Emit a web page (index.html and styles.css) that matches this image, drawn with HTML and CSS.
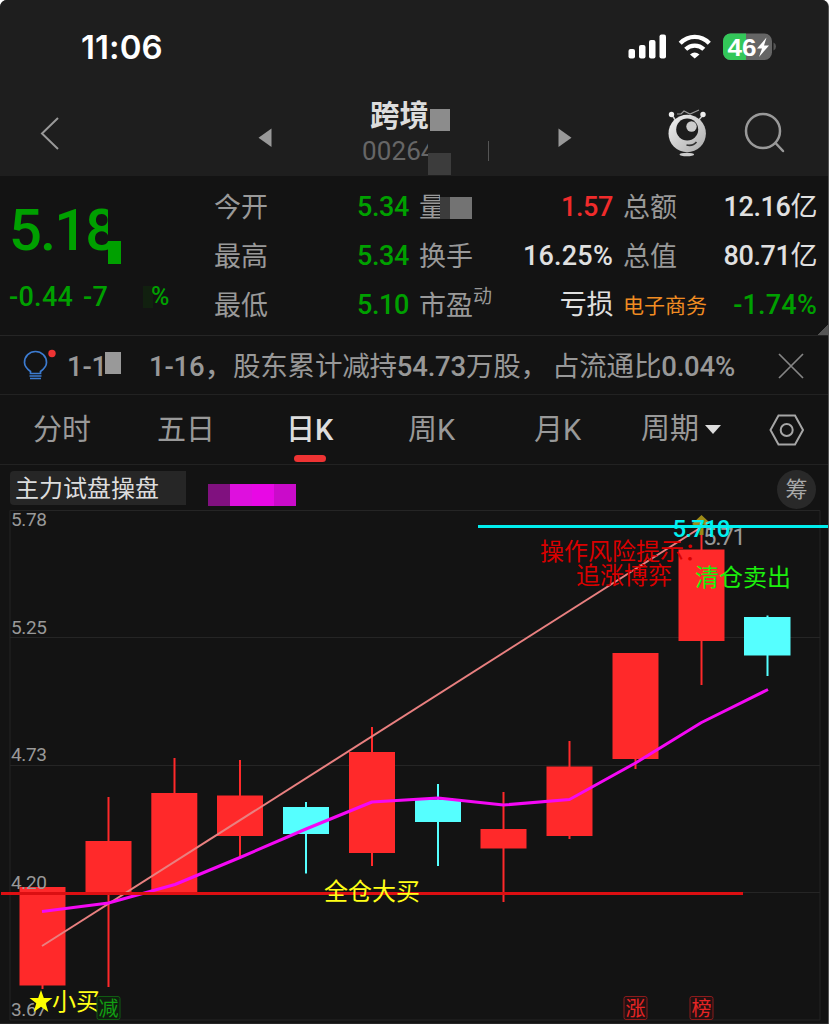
FILE: index.html
```
<!DOCTYPE html>
<html lang="zh-CN">
<head>
  <meta charset="UTF-8" />
  <meta name="viewport" content="width=device-width, initial-scale=1.0"/>
  <title>日K</title>
  <link rel="stylesheet" href="styles.css">
</head>
<body>
  <div class="phone">
    <header class="top">
      <div class="status">
        <span class="time">11:06</span>
        <svg class="signals" width="150" height="30" viewBox="626 32 150 30">
          <g fill="#fff">
            <rect x="628.5" y="49" width="6.5" height="9.5" rx="2"/>
            <rect x="639" y="45" width="6.5" height="13.5" rx="2"/>
            <rect x="649" y="40" width="6.5" height="18.5" rx="2"/>
            <rect x="659.500" y="34.500" width="6.500" height="24" rx="2"/>
            <path d="M690 54.500Q694.500 50.500 699.500 54.500L694.700 58.500Z"/>
          </g>
          <g fill="none" stroke="#fff" stroke-width="4.300">
            <path d="M680.200 43.200C688.500 34.800 701 34.800 709.300 43.200"/>
            <path d="M685.700 49.200C690.800 44.300 698.700 44.300 703.800 49.200"/>
          </g>
          <clipPath id="cell"><rect x="723" y="33.500" width="49" height="26.500" rx="7.500"/></clipPath>
          <g clip-path="url(#cell)">
            <rect x="723" y="33" width="49" height="27" fill="#656565"/>
            <rect x="723" y="33" width="23" height="27" fill="#33c759"/>
          </g>
          <path d="M773.500 42.500Q776 43.500 776 46.500T773.500 50.500Z" fill="#555"/>
          <text class="charge" x="727.500" y="55.500" textLength="29" lengthAdjust="spacingAndGlyphs">46</text>
          <path d="M766.500 37.500L757 48.500H762L759 57L769 45.500H764Z" fill="#fff"/>
        </svg>
      </div>
      <nav class="nav">
        <svg class="back" width="22" height="34" viewBox="0 0 22 34"><path d="M19 2L3 17.500L19 33" fill="none" stroke="#999" stroke-width="2"/></svg>
        <svg class="prev" width="14" height="20" viewBox="0 0 14 20"><path d="M13.500 0.500V19L0.500 9.700Z" fill="#999"/></svg>
        <div class="stock">
          <div class="name">跨境<i class="mask"></i></div>
          <div class="code"><span class="digits">00264</span><i class="mask"></i></div>
        </div>
        <i class="tick"></i>
        <svg class="next" width="14" height="20" viewBox="0 0 14 20"><path d="M0.500 0.500V19L13.500 9.700Z" fill="#999"/></svg>
        <svg class="robot" width="42" height="50" viewBox="666 107 42 50">
          <defs>
            <linearGradient id="ball" x1="0" y1="0" x2="1" y2="1"><stop offset="0" stop-color="#f2f2f2"/><stop offset="1" stop-color="#aaa"/></linearGradient>
          </defs>
          <path d="M672 115L676 121M703 115L698 121" stroke="#ccc" stroke-width="1.500"/>
          <circle cx="671.500" cy="114.500" r="2.700" fill="#eee"/>
          <circle cx="703" cy="114.500" r="2.700" fill="#eee"/>
          <path d="M677 114L681 114L684 111L690 114L699 110" fill="none" stroke="#999" stroke-width="1.200"/>
          <ellipse cx="686.800" cy="154.500" rx="7.300" ry="1.800" fill="#ccc"/>
          <circle cx="687.200" cy="133.500" r="18.700" fill="url(#ball)"/>
          <circle cx="687.200" cy="129.500" r="11" fill="#1d1d1d"/>
          <circle cx="691.500" cy="126.500" r="5.200" fill="#ccc"/>
          <path d="M686.500 145Q693 146.500 696.500 142" fill="none" stroke="#333" stroke-width="1.600"/>
        </svg>
        <svg class="search" width="42" height="42" viewBox="744 112 42 42" fill="none" stroke="#999" stroke-width="2.500" stroke-linecap="round"><circle cx="763" cy="131" r="17"/><path d="M775.500 143L783 151"/></svg>
      </nav>
    </header>

    <section class="quote">
      <div class="last">
        <div class="price"><span class="digits">5.18</span><i class="mask"></i></div>
        <div class="change"><span class="amount">-0.44</span><span class="percent">-7</span><i class="mask"></i><span class="sign">%</span></div>
      </div>
      <div class="stats">
        <div class="stat"><span>今开</span><b class="down">5.34</b></div>
        <div class="stat"><span class="masked"><em>量</em><i></i><i></i></span><b class="up">1.57</b></div>
        <div class="stat"><span>总额</span><b>12.16<em>亿</em></b></div>
        <div class="stat"><span>最高</span><b class="down">5.34</b></div>
        <div class="stat"><span>换手</span><b class="wide">16.25%</b></div>
        <div class="stat"><span>总值</span><b>80.71<em>亿</em></b></div>
        <div class="stat"><span>最低</span><b class="down">5.10</b></div>
        <div class="stat"><span>市盈<sup>动</sup></span><b><em>亏损</em></b></div>
        <div class="stat"><span class="sector">电子商务</span><b class="down wide">-1.74%</b></div>
      </div>
    </section>

    <section class="notice">
      <svg class="bulb" width="36" height="34" viewBox="22 347 36 34">
        <path d="M30.500 373.500V371.500C26.500 368.500 24.500 366.500 24.500 362.500A11 11 0 0 1 46.500 362.500C46.500 366.500 44.500 368.500 40.500 371.500V373.500ZM29.500 376H41.500M30 378.500H41" fill="none" stroke="#3c7bd0" stroke-width="1.700"/>
        <circle cx="52" cy="353.500" r="3.700" fill="#ee3333"/>
      </svg>
      <span class="from">1-1</span><i class="mask"></i>
      <span class="to">1-16，</span><span class="message">股东累计减持<b>54.73</b>万股，</span><span class="ratio">占流通比<b>0.04%</b></span>
      <svg class="close" width="26" height="26" viewBox="0 0 26 26"><path d="M1 1L25 25M25 1L1 25" stroke="#858585" stroke-width="1.700"/></svg>
    </section>

    <nav class="tabs">
      <span>分时</span>
      <span>五日</span>
      <span class="active">日K</span>
      <span>周K</span>
      <span>月K</span>
      <span class="period">周期<i></i></span>
      <svg width="36" height="34" viewBox="769 413 36 34" fill="none" stroke="#a6a6a6" stroke-width="2"><path d="M778.500 415.500H795L803 430L795 444.500H778.500L770.500 430Z"/><circle cx="786.700" cy="430" r="6"/></svg>
    </nav>

    <div class="indicator">
      <span class="formula">主力试盘操盘</span>
      <span class="mosaic"><i></i><i></i><i></i><i></i></span>
      <span class="chip">筹</span>
    </div>

    <svg class="chart" width="829" height="516" viewBox="0 508 829 516">
      <g class="grid">
        <path d="M10 510.500H820V1020H10ZM10 637.500H820M10 765.500H820M10 892.500H820"/>
        <path d="M0 1023.500H829"/>
      </g>
      <g class="red">
        <path d="M42.500 985V989M108.500 797V987M174.500 758V895M240 760V859M372 727V866M503.500 792V902M569.500 741V839M635.500 653V769M701.500 524V685"/>
        <rect x="19.500" y="887" width="46" height="98.500"/>
        <rect x="85.500" y="841" width="46" height="52"/>
        <rect x="151.300" y="793" width="46" height="99"/>
        <rect x="217" y="795.500" width="46" height="40.500"/>
        <rect x="349" y="752" width="46" height="101"/>
        <rect x="480.500" y="829" width="46" height="19.500"/>
        <rect x="546.500" y="766.500" width="46" height="69.500"/>
        <rect x="612.500" y="653" width="46" height="106"/>
        <rect x="678.500" y="549.500" width="46" height="91.500"/>
      </g>
      <g class="cyan">
        <path d="M306 802V873.500M438 784V866M767.500 615.500V676"/>
        <rect x="283" y="807" width="46" height="27"/>
        <rect x="415" y="799.500" width="46" height="22.500"/>
        <rect x="744" y="617" width="46.500" height="38.500"/>
      </g>
      <g class="axis">
        <text x="11" y="525.500" textLength="36">5.78</text>
        <text x="11" y="633.500" textLength="36">5.25</text>
        <text x="11" y="761" textLength="36">4.73</text>
        <text x="11" y="888.500" textLength="36">4.20</text>
        <text x="11" y="1015.500" textLength="36">3.67</text>
      </g>
      <path d="M42 946L701.500 527" stroke="#e98080" stroke-width="2"/>
      <path d="M42 911.500L108.500 903L175 884.500L240 857.500L306 829L372 802L438 798L503.500 805L569.500 799.500L635.500 763L701.500 722.500L768 689.500" fill="none" stroke="#f508f5" stroke-width="3" stroke-linejoin="round"/>
      <path d="M1 893.500H743" stroke="#dc0f12" stroke-width="3"/>
      <path d="M701.500 515L709 522L706 527L703.500 524V535H699.500V524L697 527L692 524Z" fill="#9d8b18"/>
      <path d="M478 526.500H829" stroke="#00eeee" stroke-width="3"/>
      <text class="high" x="703" y="545" textLength="43">5.71</text>
      <text class="level" x="672.500" y="537" textLength="58">5.710</text>
      <g class="risk">
        <text x="540" y="559.500">操作风险提示：</text>
        <text x="576" y="583.500">追涨博弈</text>
      </g>
      <text class="sell" x="695" y="586">清仓卖出</text>
      <text class="buy" x="324" y="900">全仓大买</text>
      <path d="M41 990L43.800 998H52.500L45.700 1003.200L48.300 1012L41 1006.800L33.700 1012L36.300 1003.200L29.500 998H38.200Z" fill="#ff0"/>
      <text class="buy" x="52" y="1010">小买</text>
      <g class="flag green"><rect x="97" y="996.500" width="23" height="23" rx="2"/><text x="98.500" y="1015.500">减</text></g>
      <g class="flag"><rect x="624" y="996.500" width="23" height="23" rx="2"/><text x="625.500" y="1015.500">涨</text></g>
      <g class="flag"><rect x="690" y="996.500" width="23" height="23" rx="2"/><text x="691.500" y="1015.500">榜</text></g>
    </svg>
  </div>
</body>
</html>
```
FILE: styles.css
```
* {
  box-sizing: border-box;
  margin: 0;
  padding: 0;
}
body {
  background: #fff;
  font-family: Roboto, "Noto Sans CJK SC", sans-serif;
  color: #999;
}
i, em, b {
  font-style: normal;
}
svg {
  display: block;
  flex: none;
}
.phone {
  width: 829px;
  height: 1024px;
  background: #131313;
  border-right: 1px solid #555;
  border-radius: 7px 7px 0 0;
  overflow: hidden;
}
.top {
  height: 176px;
  background: #1e1e1e;
}
.status {
  height: 94px;
  padding: 0 52px 0 81px;
  display: flex;
  justify-content: space-between;
  align-items: center;
}
.time {
  font: 600 33px/40px Inter, sans-serif;
  letter-spacing: 0.1px;
  color: #fff;
}
.charge {
  font: 700 24px "Liberation Sans", sans-serif;
  fill: #fff;
}
.nav {
  height: 82px;
  display: flex;
  align-items: flex-start;
}
.back {
  margin: 22px 0 0 39px;
}
.prev, .next {
  margin-top: 34px;
}
.prev {
  margin-left: 197px;
}
.stock {
  width: 106px;
  margin-left: 90px;
}
.name {
  height: 43px;
  padding-left: 8px;
  display: flex;
  font-size: 29.5px;
  line-height: 45px;
  font-weight: 600;
  color: #ddd;
}
.name .mask {
  width: 20px;
  height: 22px;
  margin: 15px 0 0 1px;
  background: #8c8c8c;
}
.code {
  display: flex;
  font-size: 26px;
  line-height: 28px;
  letter-spacing: 0.1px;
  color: #666;
}
.code .digits {
  width: 66px;
  height: 28px;
  overflow: hidden;
}
.code .mask {
  width: 23px;
  height: 22px;
  margin-top: 16px;
  background: #3c3c3c;
}
.tick {
  width: 1px;
  height: 20px;
  margin: 47px 0 0 20px;
  background: #555;
}
.next {
  margin-left: 69px;
}
.robot {
  margin: 13px 0 0 94px;
}
.search {
  margin: 18px 0 0 36px;
}
.quote {
  height: 160px;
  padding: 6px 10px 0 9px;
  display: flex;
  border-bottom: 1px solid #252525;
  background: linear-gradient(135deg, transparent 50%, #555 50%) right bottom / 10px 10px no-repeat;
}
.last {
  width: 205px;
  color: #00a000;
}
.price {
  height: 86px;
  display: flex;
  font-size: 58px;
  font-weight: 500;
  line-height: 96px;
  letter-spacing: -1.9px;
}
.price .digits {
  width: 99px;
  overflow: hidden;
}
.price .mask {
  width: 13px;
  height: 23px;
  margin-top: 59px;
  background: #00a000;
}
.change {
  display: flex;
  font-size: 27px;
  font-weight: 500;
  line-height: 58px;
  letter-spacing: 0.3px;
}
.amount {
  width: 74px;
}
.percent {
  width: 25px;
  overflow: hidden;
}
.change .mask {
  width: 10px;
  height: 22px;
  margin: 18px 0 0 35px;
  background: #11200f;
}
.sign {
  margin-left: -2px;
  font-size: 25px;
}
.stats {
  margin-top: 2px;
  display: grid;
  grid-template-columns: 195px 194px 194px;
  grid-auto-rows: 49px;
  column-gap: 10px;
}
.stat {
  height: 49px;
  display: flex;
  justify-content: space-between;
  font-size: 27px;
  line-height: 49px;
  white-space: nowrap;
}
.stat b {
  margin-top: -1px;
  font-weight: 500;
  letter-spacing: -0.4px;
  color: #e0e0e0;
}
.stat .wide {
  letter-spacing: 0.2px;
}
.stat b em {
  font-weight: 400;
}
.stat .down {
  color: #00a000;
}
.stat .up {
  color: #f02b2b;
}
.stat .sector {
  font-size: 21px;
  color: #f08c22;
}
.stat sup {
  font-size: 19px;
  line-height: 0;
  vertical-align: 12px;
}
.masked {
  display: flex;
}
.masked em {
  width: 21px;
  overflow: hidden;
}
.masked i {
  width: 10px;
  height: 22px;
  margin-top: 13px;
  background: #3c3c3c;
}
.masked i + i {
  width: 22px;
  background: #737373;
}
.notice {
  height: 59px;
  padding-left: 22px;
  display: flex;
  border-bottom: 1px solid #222;
  font-size: 27.5px;
  line-height: 61px;
  letter-spacing: -0.2px;
  white-space: nowrap;
  color: #989898;
}
.notice b, .from, .to {
  font-weight: 500;
}
.bulb {
  margin-top: 11px;
}
.from {
  width: 38px;
  margin-left: 9px;
  overflow: hidden;
}
.notice .mask {
  width: 16px;
  height: 22px;
  margin-top: 16px;
  background: #999;
}
.to {
  width: 84px;
  margin-left: 28px;
}
.message {
  width: 319px;
}
.ratio {
  width: 186px;
}
.close {
  margin: 17px 0 0 40px;
}
.tabs {
  height: 70px;
  padding-left: 33px;
  display: flex;
  border-bottom: 1px solid #222;
  font-size: 29px;
  line-height: 71px;
}
.tabs span {
  width: 124px;
}
.tabs .active {
  position: relative;
  width: 122px;
  margin-left: 5px;
  font-weight: 500;
  color: #ddd;
}
.active::after {
  content: "";
  position: absolute;
  left: 8px;
  top: 60px;
  width: 32px;
  height: 7px;
  border-radius: 4px;
  background: #ee3333;
}
.tabs .active + span {
  width: 126px;
}
.tabs .period {
  width: 128px;
  margin-left: -17px;
  display: flex;
  align-items: center;
}
.tabs span:nth-child(5) {
  width: 124px;
}
.period i {
  margin-left: 6px;
  border: 8px solid transparent;
  border-top: 9px solid #ddd;
  border-bottom: 0;
}
.tabs svg {
  margin-top: 18px;
}
.indicator {
  height: 43px;
  padding: 6px 12px 0 10px;
  display: flex;
}
.formula {
  width: 176px;
  height: 34px;
  padding-left: 5px;
  border-radius: 4px 0 0 4px;
  background: #262626;
  font-size: 24px;
  line-height: 36px;
  color: #ddd;
}
.mosaic {
  margin: 13px 0 0 22px;
  display: flex;
}
.mosaic i {
  width: 22px;
  height: 22px;
  background: #de10de;
}
.mosaic i:first-child {
  background: #80117f;
}
.mosaic i:nth-child(3) {
  background: #e808e5;
}
.mosaic i:last-child {
  background: #ca0bca;
}
.chip {
  width: 39px;
  height: 39px;
  margin: -1px 0 0 auto;
  border-radius: 50%;
  background: #292929;
  font-size: 22px;
  line-height: 40px;
  text-align: center;
  color: #aaa;
}
.grid path {
  fill: none;
  stroke: #252525;
}
.red {
  fill: #ff292a;
  stroke: #ff292a;
}
.cyan {
  fill: #55ffff;
  stroke: #55ffff;
}
.red path, .cyan path {
  stroke-width: 2;
}
.red rect, .cyan rect {
  stroke: none;
}
.axis {
  font-size: 19px;
  fill: #999;
}
.high {
  font-size: 24px;
  fill: #999;
}
.level {
  font-size: 24px;
  font-weight: 500;
  fill: #00f0f0;
}
.risk, .sell, .buy {
  font-size: 24px;
}
.risk {
  fill: #d90000;
}
.sell {
  fill: #1bef0c;
}
.buy {
  fill: #ffff17;
}
.flag text {
  font-size: 20px;
  fill: #e62525;
}
.flag rect {
  fill: #211112;
  stroke: #8a1c1c;
}
.flag.green text {
  fill: #12a012;
}
.flag.green rect {
  fill: #101d10;
  stroke: #105c12;
}
```
